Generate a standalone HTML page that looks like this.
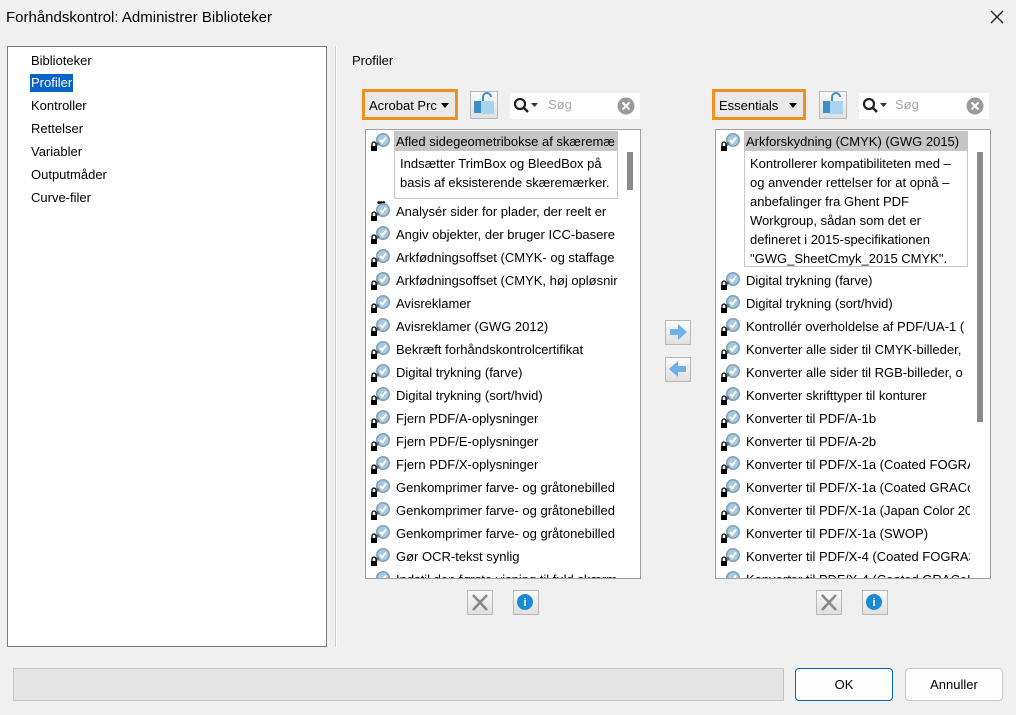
<!DOCTYPE html>
<html><head><meta charset="utf-8"><style>
*{margin:0;padding:0;box-sizing:border-box}
body{width:1016px;height:715px;background:#f0f0f0;font-family:"Liberation Sans",sans-serif;font-size:13px;color:#000;position:relative;overflow:hidden}
.a{position:absolute}
.nav div{position:absolute;left:23px;font-size:13px}
.list{position:absolute;background:#fff;border:1px solid #a0a0a0;overflow:hidden}
.row{position:absolute;left:0;height:23px;white-space:nowrap;width:260px}
.row span{position:absolute;left:30px;top:3px}
.row svg{position:absolute;left:3px;top:0}
.desc{position:absolute;left:28px;border:1px solid #c8c8c8;background:#fff;padding:3px 5px;line-height:19px;font-size:13px}
.sb{position:absolute;top:0;width:21px;bottom:0;background:#fff}
.sb i{position:absolute;left:7px;width:6px;background:#8a8a8a}
.btn{position:absolute;background:linear-gradient(#fafafa,#e0e0e0);border:1px solid #b8b8b8}
.dd{position:absolute;border:3px solid #f0901e;background:#e9e9e9;height:31px}
.dd span{position:absolute;left:4px;top:6px;font-size:13px}
.dd b{position:absolute;right:6px;top:11px;border-left:4px solid transparent;border-right:4px solid transparent;border-top:5px solid #000}
.search{position:absolute;background:#fff;height:26px}
</style></head><body>
<div class="a" style="left:6px;top:9px;font-size:15px">Forhåndskontrol: Administrer Biblioteker</div>
<svg class="a" style="left:990px;top:10px" width="14" height="14"><path d="M1 1L13 13M13 1L1 13" stroke="#222" stroke-width="1.4"/></svg>

<div class="a nav" style="left:7px;top:46px;width:320px;height:601px;background:#fff;border:1px solid #7a7a7a">
<div style="top:6px">Biblioteker</div>
<div style="top:27px;left:22px;background:#0a64c8;color:#fff;padding:1px 1px 2px">Profiler</div>
<div style="top:51px">Kontroller</div>
<div style="top:74px">Rettelser</div>
<div style="top:97px">Variabler</div>
<div style="top:120px">Outputmåder</div>
<div style="top:143px">Curve-filer</div>
</div>
<div class="a" style="left:335px;top:46px;width:2px;height:601px;border-left:1px solid #d0d0d0;border-right:1px solid #fff"></div>
<div class="a" style="left:352px;top:53px">Profiler</div>

<svg width="0" height="0" style="position:absolute"><defs>
<g id="ic"><circle cx="14" cy="9" r="7" fill="#7d9fb8"/><circle cx="14" cy="9" r="5.5" fill="#a9c8de"/><path d="M11 9l2.2 2.4L17 6.5" stroke="#fff" stroke-width="2" fill="none"/><path d="M7 14l3-2" stroke="#5b7286" stroke-width="3"/><rect x="2" y="15" width="6" height="5" fill="#000"/><path d="M3 15v-2a2 2 0 0 1 4 0v2" stroke="#000" stroke-width="1.3" fill="none"/></g>
<g id="lk"><rect x="3" y="9" width="15" height="12" fill="#3d8ec8"/><rect x="10" y="9" width="13" height="13" fill="#a9d4f0"/><path d="M12 9V5a4 4 0 0 1 8 0" stroke="#3d8ec8" stroke-width="2" fill="none"/></g>
</defs></svg>

<!-- left controls -->
<div class="dd" style="left:362px;top:89px;width:96px"><span>Acrobat Prc</span><b></b></div>
<div class="btn" style="left:470px;top:91px;width:28px;height:28px"><svg width="26" height="26"><use href="#lk"/></svg></div>
<div class="search" style="left:510px;top:93px;width:130px"><svg class="a" style="left:3px;top:4px" width="30" height="18"><circle cx="7" cy="7" r="5" stroke="#222" stroke-width="2.2" fill="none"/><path d="M10.5 10.5L15 15" stroke="#222" stroke-width="2.5"/><path d="M18 6h7l-3.5 4z" fill="#333"/></svg><span class="a" style="left:38px;top:4px;color:#a8a8a8">Søg</span><svg class="a" style="left:107px;top:4px" width="18" height="18"><circle cx="9" cy="9" r="8.5" fill="#9a9a9a"/><path d="M5.5 5.5l7 7M12.5 5.5l-7 7" stroke="#fff" stroke-width="2"/></svg></div>

<div class="list" style="left:365px;top:129px;width:276px;height:450px">
<div class="a" style="left:28px;top:1px;width:224px;height:22px;background:#c6c6c6"></div>
<div class="row" style="top:1px"><svg width="26" height="23"><use href="#ic"/></svg><span>Afled sidegeometribokse af skæremæ</span></div>
<div class="desc" style="top:20px;width:224px;height:49px">Indsætter TrimBox og BleedBox på<br>basis af eksisterende skæremærker.</div>
<div class="a" style="left:11px;top:68px;font-size:10px;letter-spacing:-1px;font-weight:bold">•••</div>
<div class="row" style="top:71px"><svg width="26" height="23"><use href="#ic"/></svg><span>Analysér sider for plader, der reelt er</span></div>
<div class="row" style="top:94px"><svg width="26" height="23"><use href="#ic"/></svg><span>Angiv objekter, der bruger ICC-basere</span></div>
<div class="row" style="top:117px"><svg width="26" height="23"><use href="#ic"/></svg><span>Arkfødningsoffset (CMYK- og staffage</span></div>
<div class="row" style="top:140px"><svg width="26" height="23"><use href="#ic"/></svg><span>Arkfødningsoffset (CMYK, høj opløsnir</span></div>
<div class="row" style="top:163px"><svg width="26" height="23"><use href="#ic"/></svg><span>Avisreklamer</span></div>
<div class="row" style="top:186px"><svg width="26" height="23"><use href="#ic"/></svg><span>Avisreklamer (GWG 2012)</span></div>
<div class="row" style="top:209px"><svg width="26" height="23"><use href="#ic"/></svg><span>Bekræft forhåndskontrolcertifikat</span></div>
<div class="row" style="top:232px"><svg width="26" height="23"><use href="#ic"/></svg><span>Digital trykning (farve)</span></div>
<div class="row" style="top:255px"><svg width="26" height="23"><use href="#ic"/></svg><span>Digital trykning (sort/hvid)</span></div>
<div class="row" style="top:278px"><svg width="26" height="23"><use href="#ic"/></svg><span>Fjern PDF/A-oplysninger</span></div>
<div class="row" style="top:301px"><svg width="26" height="23"><use href="#ic"/></svg><span>Fjern PDF/E-oplysninger</span></div>
<div class="row" style="top:324px"><svg width="26" height="23"><use href="#ic"/></svg><span>Fjern PDF/X-oplysninger</span></div>
<div class="row" style="top:347px"><svg width="26" height="23"><use href="#ic"/></svg><span>Genkomprimer farve- og gråtonebilled</span></div>
<div class="row" style="top:370px"><svg width="26" height="23"><use href="#ic"/></svg><span>Genkomprimer farve- og gråtonebilled</span></div>
<div class="row" style="top:393px"><svg width="26" height="23"><use href="#ic"/></svg><span>Genkomprimer farve- og gråtonebilled</span></div>
<div class="row" style="top:416px"><svg width="26" height="23"><use href="#ic"/></svg><span>Gør OCR-tekst synlig</span></div>
<div class="row" style="top:439px"><svg width="26" height="23"><use href="#ic"/></svg><span>Indstil den første visning til fuld skærm</span></div>
<div class="sb" style="left:254px"><i style="top:22px;height:38px"></i></div>
</div>
<div class="btn" style="left:467px;top:590px;width:26px;height:25px"><svg width="24" height="23"><path d="M5 4l14 15M19 4L5 19" stroke="#888" stroke-width="2.5"/></svg></div>
<div class="btn" style="left:513px;top:590px;width:26px;height:25px"><svg width="24" height="23"><circle cx="11" cy="11" r="8" fill="#1a8ad8"/><text x="11" y="15" font-size="11" font-weight="bold" fill="#fff" text-anchor="middle" font-family="Liberation Sans">i</text></svg></div>

<!-- arrows -->
<div class="btn" style="left:665px;top:320px;width:26px;height:25px"><svg width="24" height="23"><path d="M4 8h8V3l9 8-9 8v-5H4z" fill="#6fb0e6"/></svg></div>
<div class="btn" style="left:665px;top:357px;width:26px;height:25px"><svg width="24" height="23"><path d="M20 8h-8V3l-9 8 9 8v-5h8z" fill="#6fb0e6"/></svg></div>

<!-- right controls -->
<div class="dd" style="left:712px;top:89px;width:94px"><span>Essentials</span><b></b></div>
<div class="btn" style="left:819px;top:91px;width:28px;height:28px"><svg width="26" height="26"><use href="#lk"/></svg></div>
<div class="search" style="left:859px;top:93px;width:130px"><svg class="a" style="left:3px;top:4px" width="30" height="18"><circle cx="7" cy="7" r="5" stroke="#222" stroke-width="2.2" fill="none"/><path d="M10.5 10.5L15 15" stroke="#222" stroke-width="2.5"/><path d="M18 6h7l-3.5 4z" fill="#333"/></svg><span class="a" style="left:36px;top:4px;color:#a8a8a8">Søg</span><svg class="a" style="left:107px;top:4px" width="18" height="18"><circle cx="9" cy="9" r="8.5" fill="#9a9a9a"/><path d="M5.5 5.5l7 7M12.5 5.5l-7 7" stroke="#fff" stroke-width="2"/></svg></div>

<div class="list" style="left:715px;top:129px;width:276px;height:450px">
<div class="a" style="left:28px;top:1px;width:224px;height:22px;background:#c6c6c6"></div>
<div class="row" style="top:1px"><svg width="26" height="23"><use href="#ic"/></svg><span>Arkforskydning (CMYK) (GWG 2015)</span></div>
<div class="desc" style="top:20px;width:224px;height:117px">Kontrollerer kompatibiliteten med –<br>og anvender rettelser for at opnå –<br>anbefalinger fra Ghent PDF<br>Workgroup, sådan som det er<br>defineret i 2015-specifikationen<br>"GWG_SheetCmyk_2015 CMYK".</div>
<div class="row" style="top:140px"><svg width="26" height="23"><use href="#ic"/></svg><span>Digital trykning (farve)</span></div>
<div class="row" style="top:163px"><svg width="26" height="23"><use href="#ic"/></svg><span>Digital trykning (sort/hvid)</span></div>
<div class="row" style="top:186px"><svg width="26" height="23"><use href="#ic"/></svg><span>Kontrollér overholdelse af PDF/UA-1 (</span></div>
<div class="row" style="top:209px"><svg width="26" height="23"><use href="#ic"/></svg><span>Konverter alle sider til CMYK-billeder,</span></div>
<div class="row" style="top:232px"><svg width="26" height="23"><use href="#ic"/></svg><span>Konverter alle sider til RGB-billeder, o</span></div>
<div class="row" style="top:255px"><svg width="26" height="23"><use href="#ic"/></svg><span>Konverter skrifttyper til konturer</span></div>
<div class="row" style="top:278px"><svg width="26" height="23"><use href="#ic"/></svg><span>Konverter til PDF/A-1b</span></div>
<div class="row" style="top:301px"><svg width="26" height="23"><use href="#ic"/></svg><span>Konverter til PDF/A-2b</span></div>
<div class="row" style="top:324px"><svg width="26" height="23"><use href="#ic"/></svg><span>Konverter til PDF/X-1a (Coated FOGRA</span></div>
<div class="row" style="top:347px"><svg width="26" height="23"><use href="#ic"/></svg><span>Konverter til PDF/X-1a (Coated GRACo</span></div>
<div class="row" style="top:370px"><svg width="26" height="23"><use href="#ic"/></svg><span>Konverter til PDF/X-1a (Japan Color 20</span></div>
<div class="row" style="top:393px"><svg width="26" height="23"><use href="#ic"/></svg><span>Konverter til PDF/X-1a (SWOP)</span></div>
<div class="row" style="top:416px"><svg width="26" height="23"><use href="#ic"/></svg><span>Konverter til PDF/X-4 (Coated FOGRA3</span></div>
<div class="row" style="top:439px"><svg width="26" height="23"><use href="#ic"/></svg><span>Konverter til PDF/X-4 (Coated GRACoL</span></div>
<div class="sb" style="left:254px"><i style="top:22px;height:270px"></i></div>
</div>
<div class="btn" style="left:816px;top:590px;width:26px;height:25px"><svg width="24" height="23"><path d="M5 4l14 15M19 4L5 19" stroke="#888" stroke-width="2.5"/></svg></div>
<div class="btn" style="left:862px;top:590px;width:26px;height:25px"><svg width="24" height="23"><circle cx="11" cy="11" r="8" fill="#1a8ad8"/><text x="11" y="15" font-size="11" font-weight="bold" fill="#fff" text-anchor="middle" font-family="Liberation Sans">i</text></svg></div>

<!-- bottom -->
<div class="a" style="left:13px;top:668px;width:771px;height:33px;background:#e4e4e4;border:1px solid #c4c4c4"></div>
<div class="a" style="left:795px;top:668px;width:98px;height:33px;background:#fdfdfd;border:1px solid #0067c0;border-radius:4px;text-align:center;line-height:31px">OK</div>
<div class="a" style="left:905px;top:668px;width:98px;height:33px;background:#fdfdfd;border:1px solid #c8c8c8;border-radius:4px;text-align:center;line-height:31px">Annuller</div>
</body></html>
